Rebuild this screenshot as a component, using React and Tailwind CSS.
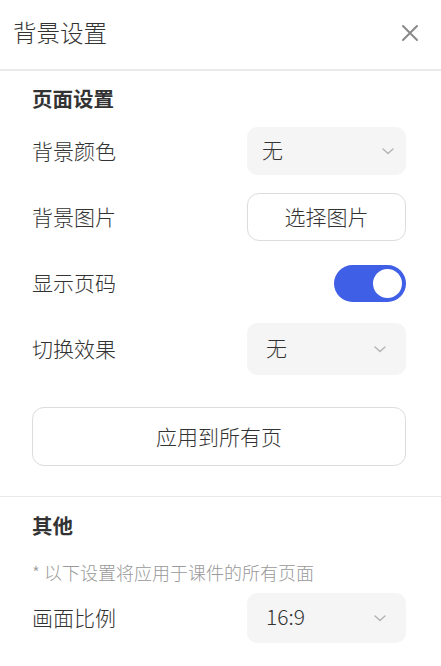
import { useState } from "react";

const font = { fontFamily: '"Noto Sans CJK SC", "Noto Sans", sans-serif' };

function Chevron() {
  return (
    <svg width="12" height="7" viewBox="0 0 12 7" fill="none">
      <path d="M1 1l5 4.5L11 1" stroke="#b3b3b3" strokeWidth="1.4" strokeLinecap="round" strokeLinejoin="round" />
    </svg>
  );
}

function Select({ value, h = "h-[48px]", pl = "pl-[15px]", pr = "pr-[12px]" }) {
  return (
    <div className={`w-[159px] ${h} ${pl} ${pr} rounded-[10px] bg-[#f5f5f5] flex items-center justify-between`}>
      <span className="text-[21px] text-[#333] leading-none -mt-[4px]">{value}</span>
      <Chevron />
    </div>
  );
}

function Row({ label, children }) {
  return (
    <div className="h-[66px] flex items-center justify-between">
      <span className="text-[21px] text-[#333]">{label}</span>
      {children}
    </div>
  );
}

export default function App() {
  const [showPage, setShowPage] = useState(true);

  return (
    <div style={font} className="w-[441px] h-[666px] bg-white overflow-hidden font-light">
      <div className="h-[71px] flex items-center justify-between pl-[13px] pr-[22px] pb-[3px] border-b-2 border-[#ebebeb]">
        <span className="text-[23.5px] text-[#333]">背景设置</span>
        <svg width="18" height="18" viewBox="0 0 18 18">
          <path d="M2 2l14 14M16 2L2 16" stroke="#8a8a8a" strokeWidth="2" strokeLinecap="round" />
        </svg>
      </div>

      <div className="pl-[32px] pr-[35px] pt-[13px] pb-[30px] border-b border-[#e8e8e8]">
        <div className="h-[28px] flex items-center text-[20.5px] font-bold text-[#333]">页面设置</div>
        <div className="mt-[6px]">
          <Row label="背景颜色">
            <Select value="无" pr="pr-[12px]" />
          </Row>
          <Row label="背景图片">
            <button className="w-[159px] h-[48px] rounded-[12px] border border-[#dcdcdc] bg-white text-[21px] text-[#333]">
              选择图片
            </button>
          </Row>
          <Row label="显示页码">
            <button
              onClick={() => setShowPage(!showPage)}
              className={`w-[72px] h-[37px] rounded-full flex items-center px-[4px] ${
                showPage ? "bg-[#3f5fe6] justify-end" : "bg-[#d9d9d9] justify-start"
              }`}
            >
              <span className="w-[29px] h-[29px] rounded-full bg-white" />
            </button>
          </Row>
          <Row label="切换效果">
            <Select value="无" h="h-[52px]" pl="pl-[19px]" pr="pr-[20px]" />
          </Row>
        </div>
        <button className="mt-[25px] w-full h-[59px] rounded-[12px] border border-[#dcdcdc] bg-white text-[21px] text-[#333]">
          应用到所有页
        </button>
      </div>

      <div className="pl-[32px] pr-[35px] pt-[14px]">
        <div className="h-[28px] flex items-center text-[20.5px] font-bold text-[#333]">其他</div>
        <div className="mt-[20px] text-[18px] leading-[26px] text-[#999]">* 以下设置将应用于课件的所有页面</div>
        <div className="mt-[8px] h-[50px] flex items-center justify-between">
          <span className="text-[21px] text-[#333]">画面比例</span>
          <Select value="16:9" h="h-[50px]" pl="pl-[19px]" pr="pr-[20px]" />
        </div>
      </div>
    </div>
  );
}
